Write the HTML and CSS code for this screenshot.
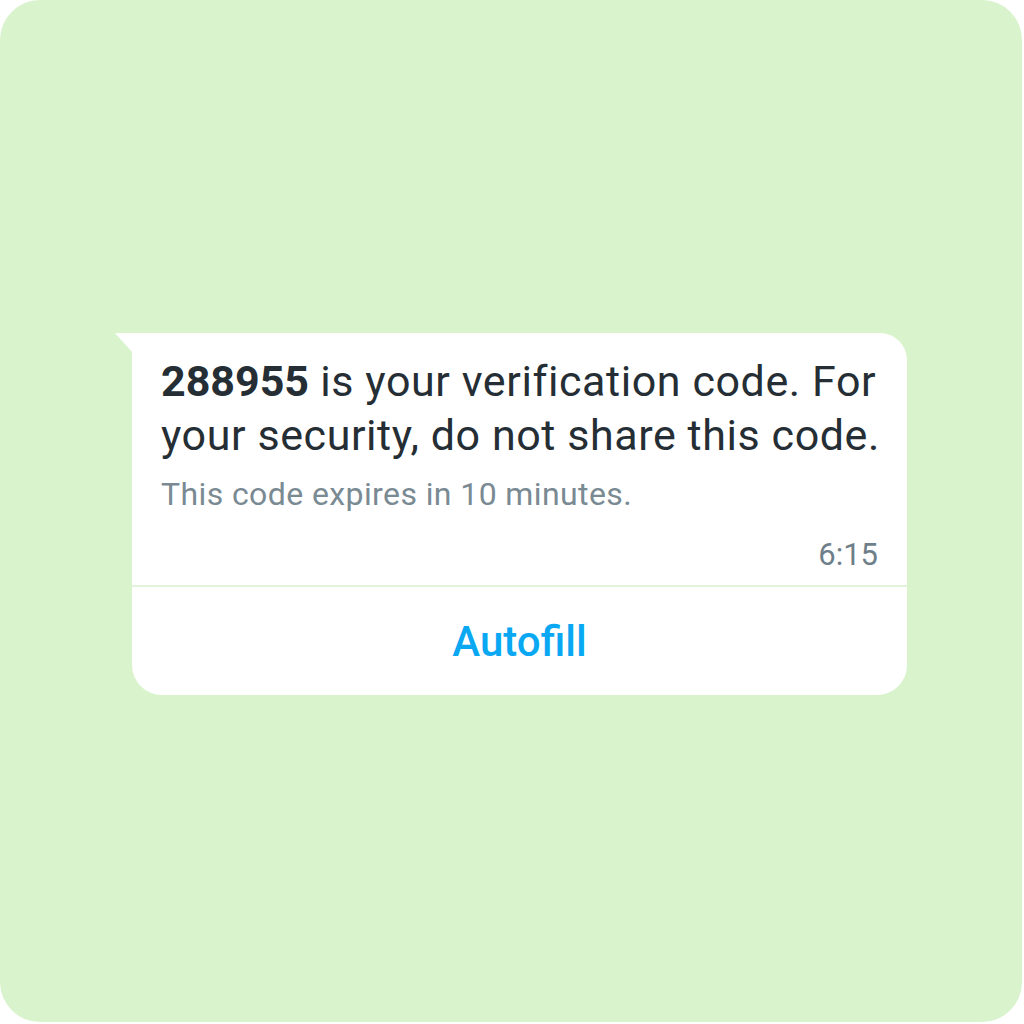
FILE: index.html
```html
<!DOCTYPE html>
<html lang="en">
<head>
<meta charset="utf-8">
<link rel="stylesheet" href="styles.css">
</head>
<body>
<div class="card">
  <div class="bubble">
    <div class="body">
      <p class="msg"><strong>288955</strong> is your verification code. For your security, do not share this code.</p>
      <p class="note">This code expires in 10 minutes.</p>
      <div class="time">6:15</div>
    </div>
    <div class="action">Autofill</div>
  </div>
</div>
</body>
</html>
```
FILE: styles.css
```css
html, body {
  margin: 0;
  padding: 0;
  background: #ffffff;
}
body {
  font-family: Roboto, "Noto Sans", "Liberation Sans", sans-serif;
}
.card {
  width: 1022px;
  height: 1022px;
  background: #d9f3cd;
  border-radius: 40px;
  box-sizing: border-box;
  padding: 333px 0 0 132px;
}
.bubble {
  position: relative;
  width: 775px;
  background: #ffffff;
  border-radius: 0 27px 30px 30px;
}
.bubble::before {
  content: "";
  position: absolute;
  left: -17px;
  top: 0;
  width: 18px;
  height: 20px;
  background: #ffffff;
  clip-path: polygon(0 0, 100% 0, 100% 100%);
}
.body {
  padding: 21px 26px 10px 29px;
  border-bottom: 2px solid #e2f3dc;
}
.msg {
  margin: 0;
  font-size: 43px;
  line-height: 54px;
  letter-spacing: 0.58px;
  color: #252e34;
}
.msg strong {
  font-weight: 700;
  letter-spacing: 0;
}
.note {
  margin: 12px 0 0;
  font-size: 32px;
  line-height: 40px;
  letter-spacing: 0.4px;
  color: #7a8a93;
}
.time {
  margin-top: 21px;
  padding-right: 3px;
  text-align: right;
  font-size: 31px;
  line-height: 40px;
  color: #6f7f89;
}
.action {
  height: 108px;
  display: flex;
  align-items: center;
  justify-content: center;
  font-size: 42px;
  font-weight: 500;
  color: #0aa8f2;
}
```
